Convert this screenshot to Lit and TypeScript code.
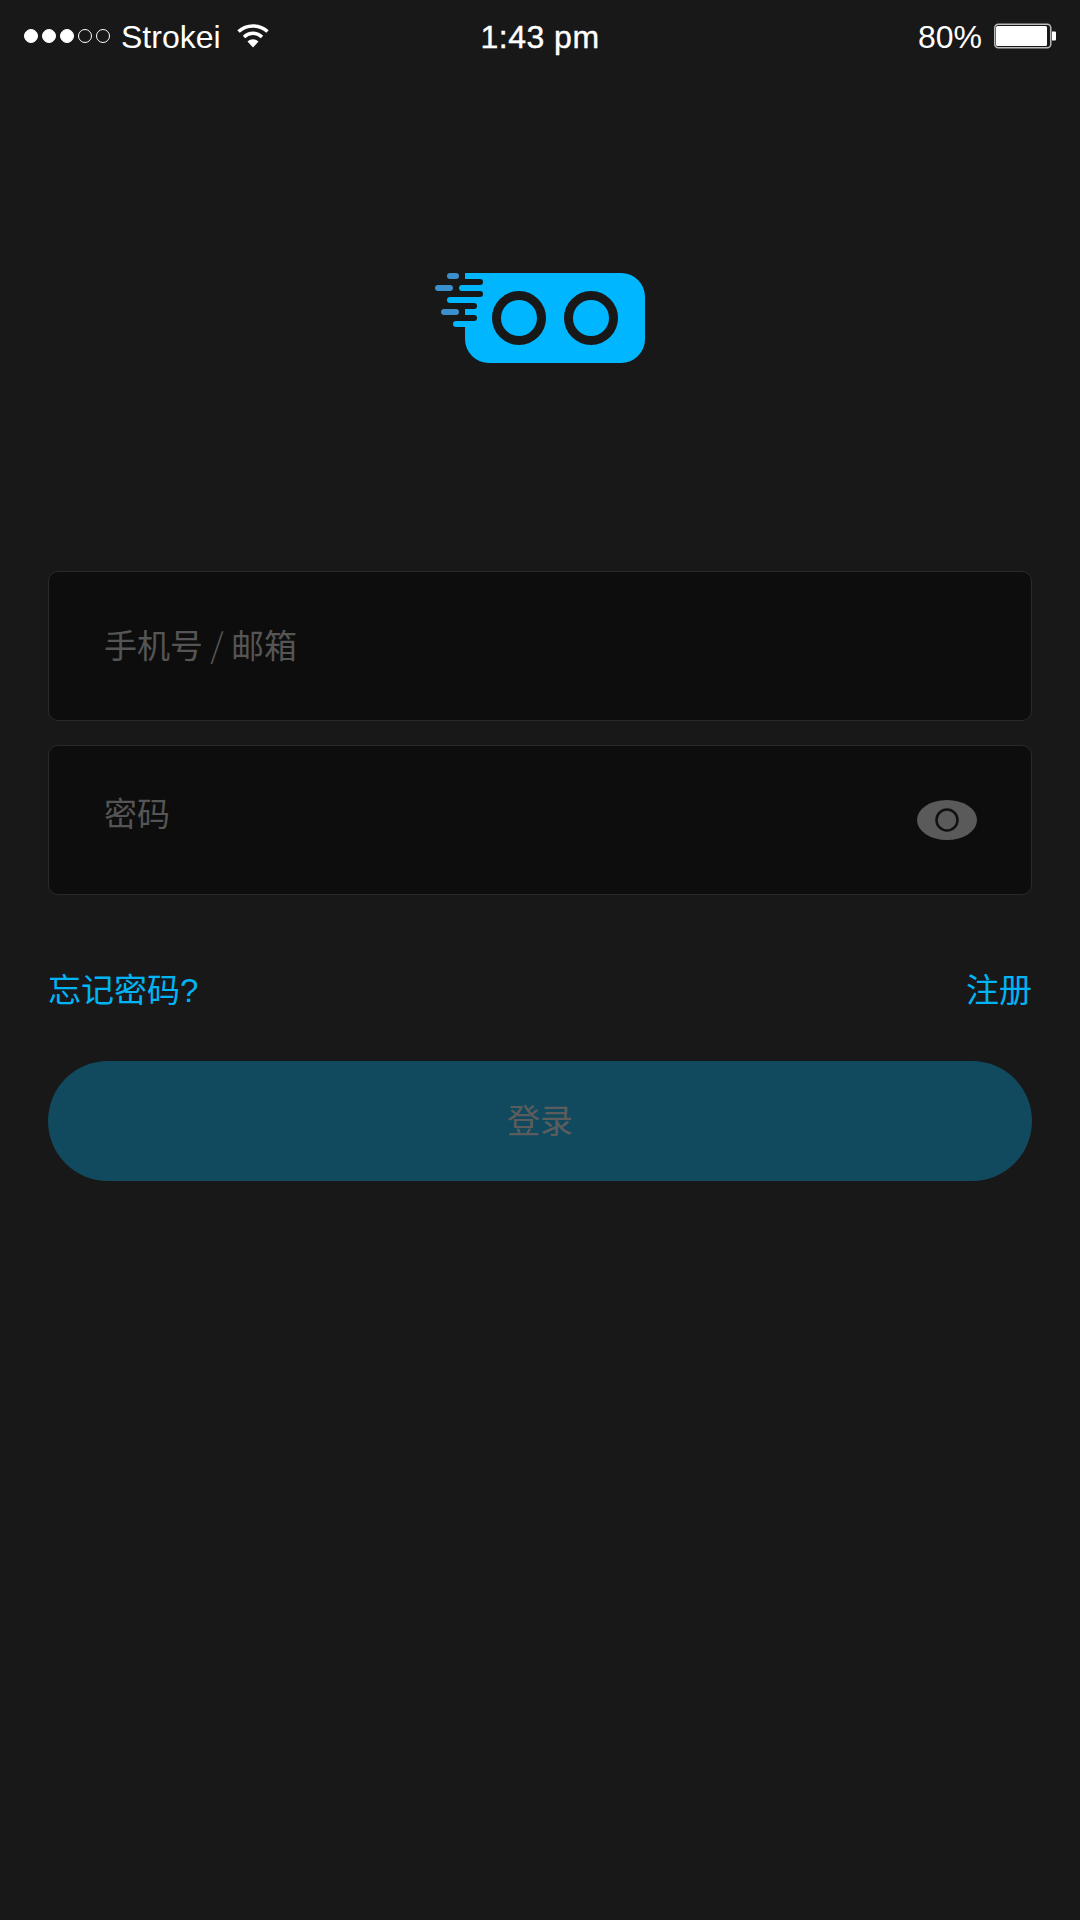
import { LitElement, html, css } from 'lit';
import { customElement } from 'lit/decorators.js';

@customElement('app-root')
export class AppRoot extends LitElement {
  static styles = css`
    :host {
      display: block;
      width: 1080px;
      height: 1920px;
      background: #181818;
      font-family: 'Liberation Sans', 'Noto Sans CJK SC', sans-serif;
      overflow: hidden;
    }
    .status {
      height: 72px;
      display: grid;
      grid-template-columns: 1fr auto 1fr;
      align-items: center;
      padding: 0 24px;
      color: #fff;
      font-size: 32px;
    }
    .status-left {
      display: flex;
      align-items: center;
    }
    .status-text {
      padding-top: 2px;
    }
    .dots {
      display: flex;
      gap: 4px;
      margin-right: 11px;
    }
    .dot {
      width: 14px;
      height: 14px;
      border-radius: 50%;
      border: 1px solid #fff;
      box-sizing: border-box;
    }
    .dot.on {
      background: #fff;
    }
    .wifi {
      margin-left: 16px;
    }
    .time {
      font-weight: 500;
      -webkit-text-stroke: 0.4px #fff;
      letter-spacing: 0.5px;
    }
    .status-right {
      display: flex;
      align-items: center;
      justify-content: flex-end;
      gap: 12px;
    }
    .logo {
      display: flex;
      justify-content: center;
      padding: 198px 0 205px;
    }
    .logo svg {
      display: block;
    }
    .form {
      padding: 0 48px;
      display: flex;
      flex-direction: column;
    }
    .field {
      height: 150px;
      box-sizing: border-box;
      background: #0d0d0d;
      border: 1px solid #2a2a2a;
      border-radius: 10px;
      display: flex;
      align-items: center;
      justify-content: space-between;
      padding: 0 54px 0 55px;
      color: #555;
      font-size: 33px;
      font-family: 'Noto Sans CJK SC', sans-serif;
    }
    .field + .field {
      margin-top: 24px;
    }
    .field .label {
      padding-bottom: 6px;
    }
    .field .raised {
      padding-bottom: 4px;
      margin-top: -12px;
    }
    .slash {
      display: inline-block;
      width: 28px;
      text-align: center;
      font-weight: 300;
      font-size: 34px;
    }
    .links {
      display: flex;
      justify-content: space-between;
      align-items: center;
      margin-top: 72px;
      color: #00b4f5;
      font-size: 33px;
      line-height: 48px;
    }
    .login {
      margin-top: 46px;
      height: 120px;
      border-radius: 60px;
      background: #114a5e;
      color: #5c5c5c;
      font-size: 33px;
      font-family: 'Noto Sans CJK SC', sans-serif;
      display: flex;
      align-items: center;
      justify-content: center;
    }
    .login span {
      padding-bottom: 4px;
    }
  `;

  render() {
    return html`
      <div class="status">
        <div class="status-left">
          <div class="dots">
            <span class="dot on"></span><span class="dot on"></span><span class="dot on"></span>
            <span class="dot"></span><span class="dot"></span>
          </div>
          <span class="status-text">Strokei</span>
          <svg class="wifi" width="32" height="26" viewBox="0 0 32 26">
            <path d="M1.5 8.5C9.5 1 22.5 1 30.5 8.5" fill="none" stroke="#fff" stroke-width="3.5" />
            <path d="M7 14C12.500 9 19.500 9 25 14" fill="none" stroke="#fff" stroke-width="3.5" />
            <path d="M10.500 18.500C14 15.500 18 15.500 21.500 18.500L16 24.500Z" fill="#fff" />
          </svg>
        </div>
        <div class="time status-text">1:43 pm</div>
        <div class="status-right">
          <span class="status-text">80%</span>
          <svg width="62" height="26" viewBox="0 0 62 26">
            <rect x="0.75" y="1.25" width="56" height="23.500" rx="3.500" fill="none" stroke="#bbb" stroke-width="1.500" />
            <rect x="2" y="3" width="51" height="20" rx="1.500" fill="#fff" />
            <path d="M58 8.500h3a1 1 0 0 1 1 1v7a1 1 0 0 1-1 1h-3Z" fill="#fff" />
          </svg>
        </div>
      </div>

      <div class="logo">
        <svg width="216" height="96" viewBox="432 270 216 96">
          <path d="M465 273H621a24 24 0 0 1 24 24V339a24 24 0 0 1-24 24H489a24 24 0 0 1-24-24Z" fill="#00b6ff" />
          <g stroke="#181818" stroke-width="6" stroke-linecap="round">
            <path d="M430 282H480" />
            <path d="M430 294H480" />
            <path d="M430 306H474" />
            <path d="M430 318H474" />
          </g>
          <g stroke="#00b6ff" stroke-width="6" stroke-linecap="round">
            <path d="M468 276H480" />
            <path d="M462 288H480" />
            <path d="M450 300H474" />
            <path d="M468 312H474" />
            <path d="M456 324H474" />
          </g>
          <g stroke="#3a8fcc" stroke-width="6" stroke-linecap="round">
            <path d="M450 276H456" />
            <path d="M438 288H450" />
            <path d="M444 312H456" />
          </g>
          <g fill="none" stroke="#181818" stroke-width="9">
            <circle cx="519" cy="318" r="22.500" />
            <circle cx="591" cy="318" r="22.500" />
          </g>
        </svg>
      </div>

      <div class="form">
        <div class="field"><span class="label">手机号<span class="slash">/</span>邮箱</span></div>
        <div class="field">
          <span class="label raised">密码</span>
          <svg width="60" height="40" viewBox="0 0 60 40">
            <ellipse cx="30" cy="20" rx="30" ry="20" fill="#5a5a5a" />
            <circle cx="30" cy="20" r="10.500" fill="none" stroke="#111" stroke-width="2.500" />
          </svg>
        </div>
        <div class="links"><span>忘记密码?</span><span>注册</span></div>
        <div class="login"><span>登录</span></div>
      </div>
    `;
  }
}
